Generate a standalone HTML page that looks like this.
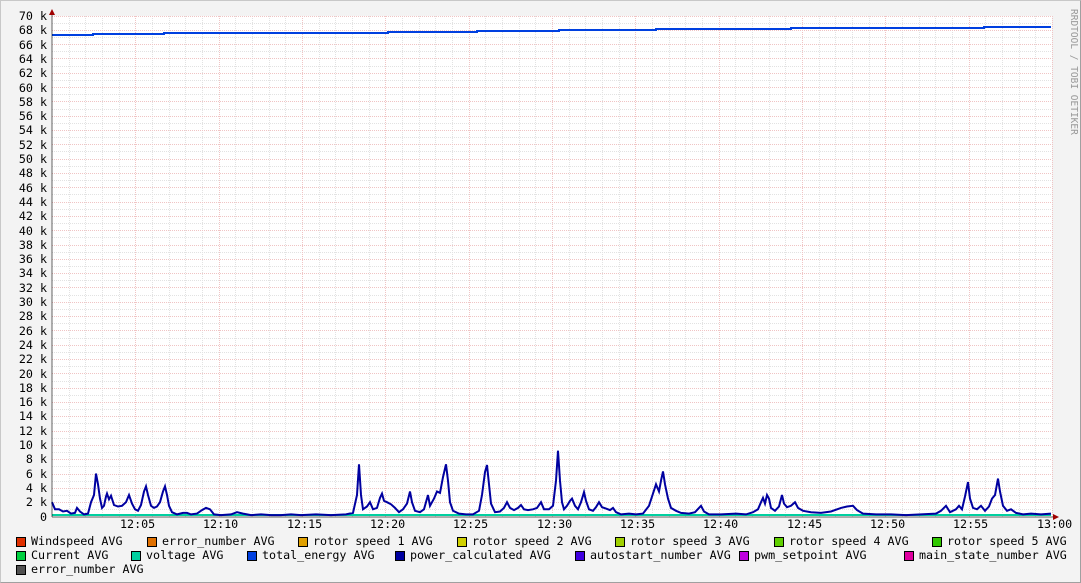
<!DOCTYPE html>
<html><head><meta charset="utf-8"><style>
html,body{margin:0;padding:0;background:#f3f3f3;}
#c{position:relative;width:1081px;height:583px;background:#f3f3f3;overflow:hidden;box-sizing:border-box;border:1px solid #c8c8c8;border-right-color:#a0a0a0;border-bottom-color:#a0a0a0;}
.t{position:absolute;font-family:"DejaVu Sans Mono","Liberation Mono",monospace;font-size:11.7px;color:#000;white-space:pre;line-height:13px;}
.yl{position:absolute;right:1035px;font-family:"DejaVu Sans Mono","Liberation Mono",monospace;font-size:11.7px;white-space:pre;line-height:12px;}
.sq{position:absolute;width:8px;height:8px;border:1px solid #000;}
svg{position:absolute;left:0;top:0;}
</style></head><body><div id="c">
<svg width="1081" height="583" id="g">
<rect x="51" y="15" width="1000" height="501" fill="#fff"/>
<g id="grid"></g>
<polyline id="te" fill="none" stroke="#0040e0" stroke-width="2" points="51,34 92,34 92,33 163,33 163,32 387,32 387,31 476,31 476,30 558,30 558,29 655,29 655,28 790,28 790,27 983,27 983,26 1050,26"/>
<line x1="51" y1="514" x2="1050" y2="514" stroke="#00d0a0" stroke-width="2"/>
<polyline id="pc" fill="none" stroke="#0000a0" stroke-width="2"/>
<line x1="51" y1="12" x2="51" y2="516" stroke="#000" stroke-width="1" opacity=".6"/>
<line x1="51" y1="516" x2="1054" y2="516" stroke="#000" stroke-width="1" opacity=".6"/>
<polygon points="48,14 54,14 51,8" fill="#a00000"/>
<polygon points="1052,513 1052,519 1058,516" fill="#a00000"/>
<text x="1070" y="8" transform="rotate(90 1070 8)" font-family="DejaVu Sans Mono,monospace" font-size="9.5" fill="#999">RRDTOOL / TOBI OETIKER</text>
</svg>
<div style="position:absolute;left:0;top:0;width:1081px;height:583px;">
<div class="yl" style="top:9px">70 k</div><div class="yl" style="top:23px">68 k</div><div class="yl" style="top:38px">66 k</div><div class="yl" style="top:52px">64 k</div><div class="yl" style="top:66px">62 k</div><div class="yl" style="top:81px">60 k</div><div class="yl" style="top:95px">58 k</div><div class="yl" style="top:109px">56 k</div><div class="yl" style="top:123px">54 k</div><div class="yl" style="top:138px">52 k</div><div class="yl" style="top:152px">50 k</div><div class="yl" style="top:166px">48 k</div><div class="yl" style="top:181px">46 k</div><div class="yl" style="top:195px">44 k</div><div class="yl" style="top:209px">42 k</div><div class="yl" style="top:224px">40 k</div><div class="yl" style="top:238px">38 k</div><div class="yl" style="top:252px">36 k</div><div class="yl" style="top:266px">34 k</div><div class="yl" style="top:281px">32 k</div><div class="yl" style="top:295px">30 k</div><div class="yl" style="top:309px">28 k</div><div class="yl" style="top:324px">26 k</div><div class="yl" style="top:338px">24 k</div><div class="yl" style="top:352px">22 k</div><div class="yl" style="top:367px">20 k</div><div class="yl" style="top:381px">18 k</div><div class="yl" style="top:395px">16 k</div><div class="yl" style="top:409px">14 k</div><div class="yl" style="top:424px">12 k</div><div class="yl" style="top:438px">10 k</div><div class="yl" style="top:452px">8 k</div><div class="yl" style="top:467px">6 k</div><div class="yl" style="top:481px">4 k</div><div class="yl" style="top:495px">2 k</div><div class="yl" style="top:510px">0</div>
</div>
<div class="t" style="left:119px;top:517px">12:05</div>
<div class="t" style="left:202px;top:517px">12:10</div>
<div class="t" style="left:286px;top:517px">12:15</div>
<div class="t" style="left:369px;top:517px">12:20</div>
<div class="t" style="left:452px;top:517px">12:25</div>
<div class="t" style="left:536px;top:517px">12:30</div>
<div class="t" style="left:619px;top:517px">12:35</div>
<div class="t" style="left:702px;top:517px">12:40</div>
<div class="t" style="left:786px;top:517px">12:45</div>
<div class="t" style="left:869px;top:517px">12:50</div>
<div class="t" style="left:952px;top:517px">12:55</div>
<div class="t" style="left:1036px;top:517px">13:00</div>

<div class="sq" style="left:15px;top:536px;background:#e03000"></div><div class="t" style="left:30px;top:534px">Windspeed AVG</div>
<div class="sq" style="left:146px;top:536px;background:#e07000"></div><div class="t" style="left:161px;top:534px">error_number AVG</div>
<div class="sq" style="left:297px;top:536px;background:#e0a000"></div><div class="t" style="left:312px;top:534px">rotor speed 1 AVG</div>
<div class="sq" style="left:456px;top:536px;background:#d0d000"></div><div class="t" style="left:471px;top:534px">rotor speed 2 AVG</div>
<div class="sq" style="left:614px;top:536px;background:#a0d000"></div><div class="t" style="left:629px;top:534px">rotor speed 3 AVG</div>
<div class="sq" style="left:773px;top:536px;background:#60d000"></div><div class="t" style="left:788px;top:534px">rotor speed 4 AVG</div>
<div class="sq" style="left:931px;top:536px;background:#30c800"></div><div class="t" style="left:946px;top:534px">rotor speed 5 AVG</div>

<div class="sq" style="left:15px;top:550px;background:#00d040"></div><div class="t" style="left:30px;top:548px">Current AVG</div>
<div class="sq" style="left:130px;top:550px;background:#00d0a0"></div><div class="t" style="left:145px;top:548px">voltage AVG</div>
<div class="sq" style="left:246px;top:550px;background:#0040e0"></div><div class="t" style="left:261px;top:548px">total_energy AVG</div>
<div class="sq" style="left:394px;top:550px;background:#0000a0"></div><div class="t" style="left:409px;top:548px">power_calculated AVG</div>
<div class="sq" style="left:574px;top:550px;background:#4000e0"></div><div class="t" style="left:589px;top:548px">autostart_number AVG</div>
<div class="sq" style="left:738px;top:550px;background:#c000e0"></div><div class="t" style="left:753px;top:548px">pwm_setpoint AVG</div>
<div class="sq" style="left:903px;top:550px;background:#e000a0"></div><div class="t" style="left:918px;top:548px">main_state_number AVG</div>

<div class="sq" style="left:15px;top:564px;background:#505050"></div><div class="t" style="left:30px;top:562px">error_number AVG</div>
</div>
<script>
var ns="http://www.w3.org/2000/svg",g=document.getElementById("grid");
function L(x1,y1,x2,y2,c){var l=document.createElementNS(ns,"line");l.setAttribute("x1",x1);l.setAttribute("y1",y1);l.setAttribute("x2",x2);l.setAttribute("y2",y2);l.setAttribute("stroke",c);l.setAttribute("stroke-width","1");l.setAttribute("stroke-dasharray","1,1");g.appendChild(l);}
var y0=515.5,k=7.157;
for(var v=1;v<=70;v+=2){var y=Math.round(y0-v*k)+0.5;L(51,y,1051,y,"#e2e2e2");}
for(var m=0;m<=60;m++){var x=Math.round(51+m*16.667)+0.5;if(x>51&&x<1051&&m%5!=0)L(x,15,x,516,"#e2e2e2");}
for(var v=2;v<=70;v+=2){var y=Math.round(y0-v*k)+0.5;L(51,y,1051,y,"#f0c4c4");}
for(var m=5;m<=60;m+=5){var x=Math.round(51+m*16.667)+0.5;L(x,15,x,516,"#f0c4c4");}
var d=[51,2,54,1,58,1,62,.7,66,.8,70,.4,74,.5,76,1.2,79,.7,83,.3,87,.4,90,2,93,3,95,6,97,4.5,99,2.5,101,1.2,103,1.5,105,2.8,106,3.2,108,2.4,110,2.9,113,1.6,117,1.4,121,1.5,125,2,128,3,131,1.8,134,1,137,.8,140,1.6,143,3.5,145,4.2,147,3,150,1.5,153,1.2,156,1.4,159,2,162,3.5,164,4.2,166,3,168,1.5,171,.6,176,.3,182,.5,186,.5,190,.3,196,.4,201,.9,205,1.2,209,1,213,.3,220,.2,230,.3,236,.6,242,.4,250,.2,260,.3,270,.2,280,.2,290,.3,300,.2,315,.3,330,.2,345,.3,352,.5,356,3,358,7.3,360,3,362,1,366,1.4,369,2,372,1,376,1.2,379,2.6,381,3.2,383,2.2,386,2,390,1.7,394,1.2,398,.6,402,1,406,1.8,409,3.5,411,2,414,.8,419,.6,423,1,427,3,429,1.5,433,2.5,436,3.5,439,3.3,442,5.5,445,7.3,447,5,449,2,452,.8,458,.4,465,.3,472,.3,478,.8,481,3,484,6.2,486,7.2,488,4.5,490,1.8,494,.6,499,.7,503,1.2,506,2,509,1.2,513,.9,517,1.2,520,1.6,523,1,527,.9,532,1,536,1.2,540,2,543,1,548,1,552,1.5,555,5,557,9.2,559,5,561,2,563,1,566,1.5,569,2.2,571,2.5,574,1.5,577,1,580,2,583,3.4,585,2.2,588,1,592,.8,595,1.3,598,2,601,1.3,605,1.1,609,.9,612,1.2,615,.6,620,.3,628,.4,635,.3,642,.4,648,1.5,652,3.2,655,4.5,658,3.5,660,5,662,6.3,664,4.5,667,2.5,670,1.2,675,.8,680,.5,688,.4,694,.6,698,1.2,700,1.5,703,.7,708,.3,720,.3,735,.4,745,.3,752,.6,757,1,760,2,762,2.6,764,1.8,766,3,768,2.5,770,1.2,774,.8,778,1.4,781,3,783,1.8,786,1.3,790,1.5,794,2,797,1.2,802,.8,810,.6,820,.5,830,.7,840,1.2,846,1.4,852,1.5,856,.9,862,.4,875,.3,890,.3,905,.2,920,.3,935,.4,940,.8,945,1.5,949,.6,955,1,958,1.5,961,1,964,2.8,967,4.8,969,2.5,972,1.2,976,1,980,1.5,984,.8,988,1.4,991,2.5,994,3,997,5.3,999,3.5,1002,1.5,1006,.8,1010,1,1015,.5,1022,.3,1030,.4,1040,.3,1050,.4];
var p=[];for(var i=0;i<d.length;i+=2)p.push(d[i]+","+(y0-d[i+1]*k).toFixed(1));
document.getElementById("pc").setAttribute("points",p.join(" "));
</script>
</body></html>
